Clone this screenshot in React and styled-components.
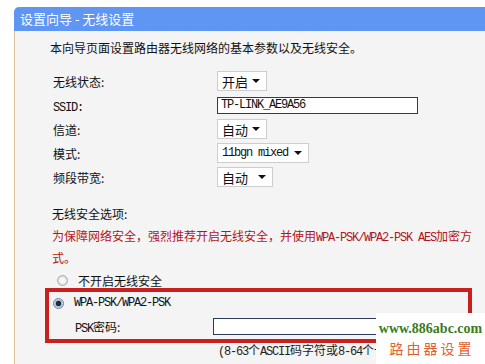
import React from 'react';
import styled, { createGlobalStyle } from 'styled-components';

const GlobalStyle = createGlobalStyle`
  html, body {
    margin: 0;
    padding: 0;
    background: #ffffff;
    overflow: hidden;
  }
  body {
    font-family: "Noto Sans CJK SC", "DejaVu Sans", sans-serif;
    font-size: 12px;
    color: #111;
  }
`;

const Page = styled.div`
  width: 485px;
  height: 364px;
  position: relative;
  overflow: hidden;
  padding: 7px 0 0 14px;
  box-sizing: border-box;
`;

const Panel = styled.div`
  width: 480px;
  height: 400px;
  display: flex;
  flex-direction: column;
`;

const TitleBar = styled.div`
  height: 24px;
  background: #5f95f3;
  border-top-left-radius: 5px;
  color: #fff;
  font-size: 13px;
  line-height: 24px;
  padding-left: 6px;
`;

const Body = styled.div`
  flex: 1;
  background: #f4f4f4;
  border-left: 1px solid #dcc39d;
  padding: 7px 0 0 37px;
`;

const Content = styled.div`
  width: 422px;
`;

const Intro = styled.div`
  line-height: 20px;
  margin-left: -2px;
  font-size: 12px;
`;

const Form = styled.div`
  margin-top: 11px;
  display: flex;
  flex-direction: column;
`;

const Row = styled.div`
  height: 24px;
  display: flex;
  align-items: center;
`;

const Label = styled.div`
  width: 164px;
  padding-left: 1px;
  font-size: 12px;
`;

const Mono = styled.span`
  font-family: "Liberation Mono", "DejaVu Sans Mono", monospace;
  font-size: 12px;
  letter-spacing: -1.2px;
  line-height: 1;
`;

const Select = styled.div`
  width: ${(p) => p.$w}px;
  height: 20px;
  box-sizing: border-box;
  border: 1px solid #cdcdcd;
  background: #fff;
  display: flex;
  align-items: center;
  justify-content: space-between;
  padding: 0 6px 0 4px;
  font-size: 13px;
`;

const Arrow = styled.span`
  width: 0;
  height: 0;
  border-left: 4px solid transparent;
  border-right: 4px solid transparent;
  border-top: 4px solid #111;
`;

const TextInput = styled.div`
  width: 201px;
  height: 17px;
  box-sizing: border-box;
  border: 1px solid #2c3b57;
  background: #fff;
  padding-left: 3px;
  display: flex;
  align-items: center;
`;

const SectionTitle = styled.div`
  margin-top: 14px;
  line-height: 22px;
`;

const Warning = styled.div`
  line-height: 22px;
  color: #b3151a;
`;

const RadioRow = styled.div`
  height: 22px;
  display: flex;
  align-items: center;
  padding-left: ${(p) => p.$pl}px;
  gap: 10px;
`;

const Radio = styled.span`
  width: 11px;
  height: 11px;
  border-radius: 50%;
  box-sizing: border-box;
  border: 1px solid ${(p) => (p.$checked ? '#6c7f95' : '#a9a9a9')};
  background: ${(p) =>
    p.$checked
      ? 'radial-gradient(circle, #1d2c3e 0 2.5px, #9fb4cc 3px, #e6edf5 5px)'
      : 'radial-gradient(circle, #f7f7f7 0 2px, #d8d8d8 5px)'};
`;

const SecureBox = styled.div`
  margin: -3px 0 0 -7px;
  width: 427px;
  height: 55px;
  box-sizing: border-box;
  border: 4px solid #c8201f;
`;

const PskRow = styled.div`
  height: 24px;
  display: flex;
  align-items: center;
  padding-left: 26px;
`;

const PskLabel = styled.div`
  width: 138px;
`;

const Hint = styled.div`
  margin-left: 166px;
  line-height: 14px;
  white-space: nowrap;
  color: #222;
`;

const Watermark = styled.div`
  position: absolute;
  left: 376px;
  top: 313px;
  width: 109px;
  height: 51px;
  background: #fff;
  display: flex;
  flex-direction: column;
  align-items: center;
  padding-top: 7px;
  box-sizing: border-box;
`;

const Site = styled.div`
  font-family: "Liberation Serif", serif;
  font-weight: bold;
  font-size: 14px;
  color: #3c7b1c;
  line-height: 18px;
`;

const SiteName = styled.div`
  font-size: 14px;
  color: #e2602e;
  letter-spacing: 3px;
  line-height: 20px;
  margin-left: 3px;
`;

export default function App() {
  return (
    <>
      <GlobalStyle />
      <Page>
        <Panel>
          <TitleBar>设置向导 - 无线设置</TitleBar>
          <Body>
            <Content>
              <Intro>本向导页面设置路由器无线网络的基本参数以及无线安全。</Intro>
              <Form>
                <Row>
                  <Label>无线状态:</Label>
                  <Select $w={50}>开启<Arrow /></Select>
                </Row>
                <Row>
                  <Label><Mono>SSID:</Mono></Label>
                  <TextInput><Mono>TP-LINK_AE9A56</Mono></TextInput>
                </Row>
                <Row>
                  <Label>信道:</Label>
                  <Select $w={50}>自动<Arrow /></Select>
                </Row>
                <Row>
                  <Label>模式:</Label>
                  <Select $w={92}><Mono>11bgn mixed</Mono><Arrow /></Select>
                </Row>
                <Row>
                  <Label>频段带宽:</Label>
                  <Select $w={56}>自动<Arrow /></Select>
                </Row>
              </Form>
              <SectionTitle>无线安全选项:</SectionTitle>
              <Warning>
                为保障网络安全，强烈推荐开启无线安全，并使用<Mono>WPA-PSK/WPA2-PSK AES</Mono>加密方式。
              </Warning>
              <RadioRow $pl={5}>
                <Radio />
                <span>不开启无线安全</span>
              </RadioRow>
              <SecureBox>
                <RadioRow $pl={4}>
                  <Radio $checked />
                  <Mono>WPA-PSK/WPA2-PSK</Mono>
                </RadioRow>
                <PskRow>
                  <PskLabel><Mono>PSK</Mono>密码:</PskLabel>
                  <TextInput />
                </PskRow>
              </SecureBox>
              <Hint>
                <Mono>(8-63</Mono>个<Mono>ASCII</Mono>码字符或<Mono>8-64</Mono>个十六进制字符<Mono>)</Mono>
              </Hint>
            </Content>
          </Body>
        </Panel>
        <Watermark>
          <Site>www.886abc.com</Site>
          <SiteName>路由器设置</SiteName>
        </Watermark>
      </Page>
    </>
  );
}
